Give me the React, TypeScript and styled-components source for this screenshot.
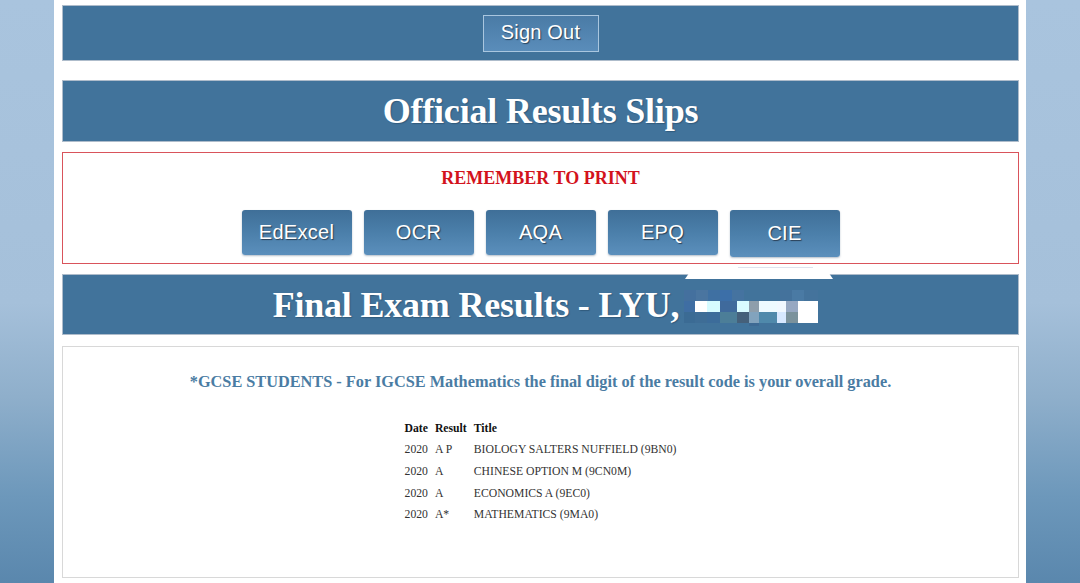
import React from "react";
import styled, { createGlobalStyle } from "styled-components";

const GlobalStyle = createGlobalStyle`
  html, body {
    margin: 0;
    padding: 0;
  }
  body {
    min-height: 583px;
    background: linear-gradient(to bottom, #a9c4de 0%, #a5c0da 52%, #8fafcb 68%, #6d98bb 85%, #5a87ad 100%);
    font-family: "Liberation Serif", "Times New Roman", serif;
  }
`;

const Page = styled.div`
  width: 972px;
  min-height: 583px;
  margin: 0 auto;
  background: #ffffff;
  box-sizing: border-box;
  padding: 5px 7px 5px 8px;
  display: flex;
  flex-direction: column;
`;

const Bar = styled.div<{ $h: number; $mt?: number }>`
  position: relative;
  box-sizing: border-box;
  height: ${(p) => p.$h}px;
  margin-top: ${(p) => p.$mt ?? 0}px;
  background: #41739b;
  border: 1px solid #aebccb;
  display: flex;
  align-items: center;
  justify-content: center;
`;

const SignOut = styled.button`
  width: 116px;
  height: 37px;
  box-sizing: border-box;
  border: 1px solid #a9c6df;
  background: linear-gradient(to bottom, #4a7ba6 0%, #5a8dba 100%);
  color: #ffffff;
  font-family: "Liberation Sans", Arial, sans-serif;
  font-size: 20px;
  letter-spacing: 0.2px;
  text-shadow: 1px 1px 1px #28445e;
  padding: 0 0 2px 0;
  margin-top: 1px;
`;

const BigTitle = styled.h1<{ $size: number; $offset?: number }>`
  margin: 0;
  padding-left: ${(p) => p.$offset ?? 0}px;
  color: #ffffff;
  font-family: "Liberation Serif", "Times New Roman", serif;
  font-weight: bold;
  font-size: ${(p) => p.$size}px;
  letter-spacing: -0.2px;
  text-shadow: 1px 1px 1px rgba(20, 45, 70, 0.35);
  display: flex;
  align-items: center;
  white-space: nowrap;
`;

const PrintBox = styled.div`
  box-sizing: border-box;
  height: 112px;
  margin-top: 10px;
  border: 1px solid #d9535b;
  display: flex;
  flex-direction: column;
  align-items: center;
`;

const Remember = styled.div`
  margin-top: 15px;
  color: #d3121c;
  font-weight: bold;
  font-size: 18px;
  line-height: 20px;
`;

const ButtonRow = styled.div`
  margin-top: 22px;
  display: flex;
  gap: 12px;
  align-items: flex-start;
`;

const BoardButton = styled.button<{ $tall?: boolean }>`
  width: 110px;
  height: ${(p) => (p.$tall ? 47 : 45)}px;
  box-sizing: border-box;
  border: none;
  border-radius: 3px;
  background: linear-gradient(to bottom, #3f6f98 0%, #4b7faa 50%, #5b8fbc 100%);
  box-shadow: 0 1px 2px rgba(40, 70, 100, 0.35);
  color: #ffffff;
  font-family: "Liberation Sans", Arial, sans-serif;
  font-size: 20px;
  letter-spacing: 0.3px;
  text-shadow: 1px 1px 1px #2a3f55;
  padding: 0;
`;

const Tab = styled.div`
  position: absolute;
  left: 622px;
  top: -9px;
  width: 148px;
  height: 13px;
  background: #ffffff;
  clip-path: polygon(6% 0, 94% 0, 100% 100%, 0 100%);
  &::before {
    content: "";
    position: absolute;
    left: 53px;
    top: 1px;
    width: 75px;
    height: 1px;
    background: #dfe3ee;
  }
`;

const Mosaic = styled.svg`
  display: block;
  margin-left: 5px;
  margin-top: 7px;
`;

const Content = styled.div`
  box-sizing: border-box;
  height: 232px;
  margin-top: 11px;
  border: 1px solid #d8d8d8;
  display: flex;
  flex-direction: column;
  align-items: center;
`;

const Note = styled.p`
  margin: 25px 0 0;
  color: #4a7ca3;
  font-weight: bold;
  font-size: 16.3px;
  line-height: 20px;
`;

const Table = styled.table`
  margin-top: 26px;
  border-collapse: collapse;
  font-family: "Liberation Serif", "Times New Roman", serif;
  font-size: 11.7px;
  color: #333;
`;

const Th = styled.th`
  text-align: left;
  font-weight: bold;
  padding: 0 7px 0 0;
  height: 21px;
  color: #111;
  &:last-child {
    padding-right: 0;
  }
`;

const Td = styled.td`
  text-align: left;
  padding: 0 7px 0 0;
  height: 21.7px;
  &:last-child {
    padding-right: 0;
  }
`;

const mosaicCells: [number, number, number, number, string][] = [
  // row 1
  [0, 0, 12, 11, "#44709e"],
  [12, 0, 12, 11, "#4a75a0"],
  [24, 0, 12, 11, "#3f70a2"],
  [36, 0, 12, 11, "#3c6fa8"],
  [48, 0, 12, 11, "#4573a0"],
  [96, 0, 12, 11, "#44729c"],
  [108, 0, 12, 11, "#4a7aa4"],
  [120, 0, 14, 11, "#44739c"],
  // row 2
  [0, 11, 11, 11, "#3f6ea3"],
  [11, 11, 12, 11, "#ffffff"],
  [23, 11, 13, 11, "#d6fbff"],
  [36, 11, 17, 11, "#3f6a9c"],
  [53, 11, 12, 11, "#d9fbff"],
  [65, 11, 10, 11, "#8e9eab"],
  [75, 11, 18, 11, "#eefaff"],
  [93, 11, 9, 11, "#f1f8ff"],
  [102, 11, 12, 11, "#97a8c2"],
  [114, 11, 20, 11, "#ffffff"],
  // row 3
  [0, 22, 11, 11, "#3b6b94"],
  [11, 22, 12, 11, "#3e6d96"],
  [23, 22, 13, 11, "#3c6c9a"],
  [36, 22, 17, 11, "#4c7e98"],
  [53, 22, 12, 11, "#45607a"],
  [65, 22, 10, 11, "#82a3bd"],
  [75, 22, 18, 11, "#4f89ab"],
  [93, 22, 9, 11, "#d7e8ff"],
  [102, 22, 12, 11, "#7b929c"],
  [114, 22, 20, 11, "#ffffff"],
  [65, 33, 10, 3, "#3e6a94"],
];

const rows = [
  ["2020", "A P", "BIOLOGY SALTERS NUFFIELD (9BN0)"],
  ["2020", "A", "CHINESE OPTION M (9CN0M)"],
  ["2020", "A", "ECONOMICS A (9EC0)"],
  ["2020", "A*", "MATHEMATICS (9MA0)"],
];

export default function App() {
  return (
    <>
      <GlobalStyle />
      <Page>
        <Bar $h={56}>
          <SignOut>Sign Out</SignOut>
        </Bar>
        <Bar $h={62} $mt={19}>
          <BigTitle $size={36}>Official Results Slips</BigTitle>
        </Bar>
        <PrintBox>
          <Remember>REMEMBER TO PRINT</Remember>
          <ButtonRow>
            <BoardButton>EdExcel</BoardButton>
            <BoardButton>OCR</BoardButton>
            <BoardButton>AQA</BoardButton>
            <BoardButton>EPQ</BoardButton>
            <BoardButton $tall>CIE</BoardButton>
          </ButtonRow>
        </PrintBox>
        <Bar $h={61} $mt={10}>
          <Tab />
          <BigTitle $size={36} $offset={10}>
            Final Exam Results - LYU,
            <Mosaic width="134" height="36" viewBox="0 0 134 36" aria-hidden>
              {mosaicCells.map(([x, y, w, h, c], i) => (
                <rect key={i} x={x} y={y} width={w} height={h} fill={c} />
              ))}
            </Mosaic>
          </BigTitle>
        </Bar>
        <Content>
          <Note>*GCSE STUDENTS - For IGCSE Mathematics the final digit of the result code is your overall grade.</Note>
          <Table>
            <thead>
              <tr>
                <Th>Date</Th>
                <Th>Result</Th>
                <Th>Title</Th>
              </tr>
            </thead>
            <tbody>
              {rows.map((r) => (
                <tr key={r[2]}>
                  <Td>{r[0]}</Td>
                  <Td>{r[1]}</Td>
                  <Td>{r[2]}</Td>
                </tr>
              ))}
            </tbody>
          </Table>
        </Content>
      </Page>
    </>
  );
}
